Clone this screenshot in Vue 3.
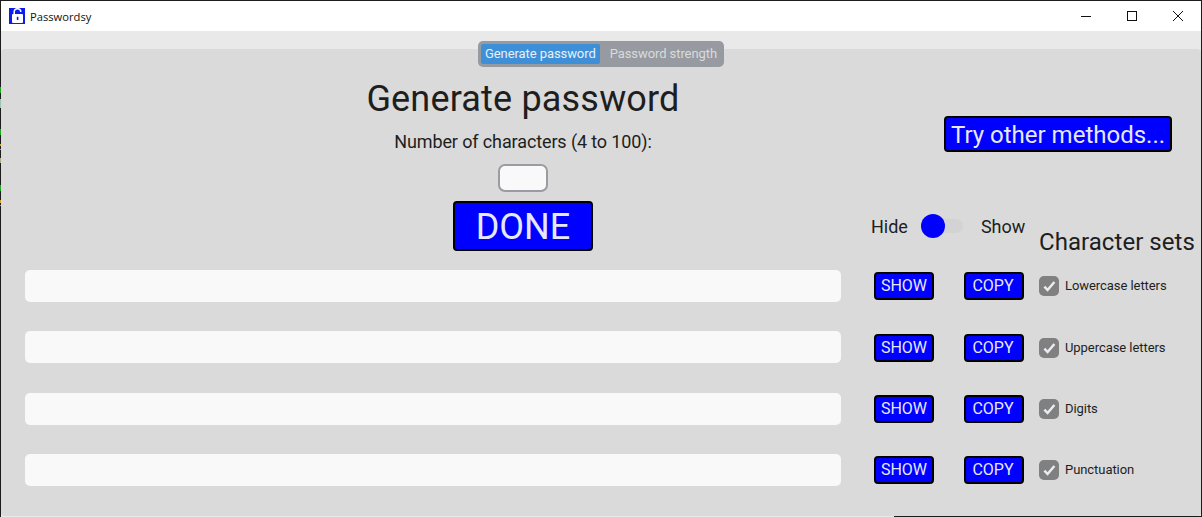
<script setup>
const rows = [
  'Lowercase letters',
  'Uppercase letters',
  'Digits',
  'Punctuation',
]
</script>

<template>
  <div class="window">
    <header class="titlebar">
      <svg class="app-icon" viewBox="0 0 16 16" width="16" height="16">
        <rect width="16" height="16" fill="#0a1cf0" />
        <path d="M5.2 7V4a3.3 3.3 0 0 1 6.6 0" fill="none" stroke="#fff" stroke-width="1.5" />
        <rect x="3" y="6" width="11" height="9" rx="1" fill="#fff" />
        <rect x="7.8" y="8.8" width="1.6" height="3.2" fill="#0a1cf0" />
      </svg>
      <span class="app-name">Passwordsy</span>
      <div class="controls">
        <svg class="ctl" viewBox="0 0 46 30" width="46" height="30">
          <path d="M18 15.5h10" stroke="#111" stroke-width="1" fill="none" />
        </svg>
        <svg class="ctl" viewBox="0 0 46 30" width="46" height="30">
          <rect x="18.5" y="10.5" width="9" height="9" stroke="#111" fill="none" />
        </svg>
        <svg class="ctl" viewBox="0 0 46 30" width="46" height="30">
          <path d="M18 10l10 10M28 10l-10 10" stroke="#111" fill="none" />
        </svg>
      </div>
    </header>

    <div class="content">
      <nav class="tabs">
        <span class="tab active">Generate password</span>
        <span class="tab">Password strength</span>
      </nav>

      <main class="panel">
        <section class="top">
          <div class="intro">
            <h1>Generate password</h1>
            <label class="count-label">Number of characters (4 to 100):</label>
            <input class="count" type="text" />
            <button class="done">DONE</button>
          </div>
          <div class="side">
            <button class="other">Try other methods...</button>
            <div class="side-row">
              <div class="toggle-row">
                <span>Hide</span>
                <span class="switch"><span class="knob"></span></span>
                <span>Show</span>
              </div>
              <h2>Character sets</h2>
            </div>
          </div>
        </section>

        <section class="rows">
          <div v-for="label in rows" :key="label" class="row">
            <div class="field"></div>
            <button class="small show">SHOW</button>
            <button class="small copy">COPY</button>
            <span class="check">
              <svg viewBox="0 0 20 20" width="20" height="20">
                <path d="M5.4 10.6l3.2 3.4L15.4 6" fill="none" stroke="#e9edf2" stroke-width="2.5" />
              </svg>
            </span>
            <span class="check-label">{{ label }}</span>
          </div>
        </section>
      </main>
    </div>
    <div class="edge-left"></div>
    <div class="edge-bottom"></div>
  </div>
</template>

<style scoped>
.window {
  width: 1202px;
  height: 517px;
  box-sizing: border-box;
  border: 1px solid #1c1c1c;
  border-bottom: 0;
  background: #e9e9e9;
  font-family: Roboto, "Liberation Sans", sans-serif;
  color: #1e1e1e;
  display: flex;
  flex-direction: column;
  position: relative;
}
.edge-left {
  position: absolute;
  left: -1px;
  top: 0;
  width: 1px;
  height: 516px;
  background: linear-gradient(
    to bottom,
    #1c1c1c 86px, #1fa81f 86px, #1fa81f 92px, #1c1c1c 92px,
    #1c1c1c 98px, #9cc4ac 98px, #9cc4ac 107px, #1c1c1c 107px,
    #1c1c1c 128px, #1fa81f 128px, #1fa81f 134px, #1c1c1c 134px,
    #1c1c1c 143px, #c9a227 143px, #c9a227 145px, #1c1c1c 145px,
    #1c1c1c 148px, #c9a227 148px, #c9a227 149px, #1c1c1c 149px,
    #1c1c1c 157px, #a8b088 157px, #a8b088 162px, #1c1c1c 162px,
    #1c1c1c 184px, #1fa81f 184px, #1fa81f 190px, #1c1c1c 190px,
    #1c1c1c 199px, #c9a227 199px, #c9a227 202px, #1c1c1c 202px,
    #1c1c1c 204px, #c9a227 204px, #c9a227 205px, #1c1c1c 205px
  );
}
.edge-bottom {
  position: absolute;
  left: 893px;
  right: -1px;
  bottom: 0;
  height: 1px;
  background: #1c1c1c;
}
.titlebar {
  height: 30px;
  flex: none;
  background: #fff;
  display: flex;
  align-items: center;
  padding-left: 8px;
}
.app-icon { flex: none; }
.app-name {
  margin-left: 5px;
  font: 11.2px "Open Sans", "Liberation Sans", sans-serif;
  color: #111;
}
.controls {
  margin-left: auto;
  display: flex;
}
.ctl { display: block; margin-left: 0; }
.content {
  flex: 1;
  display: flex;
  flex-direction: column;
  position: relative;
  padding-top: 18px;
  min-height: 0;
}
.tabs {
  position: absolute;
  top: 10px;
  left: 477px;
  width: 246px;
  height: 26px;
  box-sizing: border-box;
  padding: 3px;
  background: #979aa0;
  border-radius: 5px;
  display: flex;
  font-size: 13px;
  letter-spacing: -0.08px;
  z-index: 1;
}
.tab {
  line-height: 20px;
  padding: 0 5px;
  color: #d9dbdf;
  white-space: nowrap;
}
.tab.active {
  background: #3d8fd8;
  color: #e8f0f8;
  border-radius: 2px;
  box-sizing: border-box;
  width: 120px;
  padding: 0 4px;
  margin-right: 5px;
}
.panel {
  flex: 1;
  min-height: 0;
  background: #dadada;
  border-radius: 4px;
  margin-bottom: 1px;
}
.top {
  height: 221px;
  display: flex;
}
.intro {
  width: 640px;
  margin-left: 202px;
  flex: none;
  display: flex;
  flex-direction: column;
  align-items: center;
}
h1 {
  margin: 29px 0 0;
  font-size: 36px;
  line-height: 42px;
  font-weight: 400;
  letter-spacing: 0.18px;
  color: #1e1e1e;
}
.count-label {
  margin-top: 11px;
  font-size: 18px;
  line-height: 22px;
  letter-spacing: -0.12px;
}
.count {
  margin-top: 11px;
  width: 50px;
  height: 28px;
  box-sizing: border-box;
  border: 2px solid #9a9ca1;
  border-radius: 7px;
  background: #f9f9f9;
  padding: 0;
  outline: none;
}
.done {
  margin-top: 9px;
  width: 140px;
  height: 50px;
  background: #0000ff;
  border: 2px solid #000;
  border-radius: 4px;
  color: #e6e9f5;
  font: 36px Roboto, sans-serif;
  padding: 2px 0 0;
}
.side {
  flex: 1;
  min-width: 0;
  display: flex;
  flex-direction: column;
  align-items: flex-start;
}
.other {
  margin: 67px 0 0 101px;
  width: 228px;
  height: 36px;
  background: #0000ff;
  border: 2px solid #000;
  border-radius: 4px;
  color: #e6e9f5;
  font: 24px Roboto, sans-serif;
  padding: 2px 0 0;
  white-space: nowrap;
}
.side-row {
  display: flex;
  margin-top: 52px;
  width: 100%;
  align-items: flex-start;
}
.toggle-row {
  margin-left: 28px;
  margin-top: 9px;
  width: 168px;
  flex: none;
  display: flex;
  align-items: center;
  font-size: 18px;
  height: 26px;
}
.switch {
  margin-left: 13px;
  margin-right: 18px;
  width: 42px;
  height: 14px;
  border-radius: 7px;
  background: #d3d3d3;
  position: relative;
  flex: none;
}
.knob {
  position: absolute;
  left: 0;
  top: -5px;
  width: 24px;
  height: 24px;
  border-radius: 50%;
  background: #0000ff;
}
h2 {
  margin: 24px 0 0;
  font-size: 24px;
  line-height: 28px;
  font-weight: 400;
  letter-spacing: 0.05px;
  color: #1e1e1e;
  white-space: nowrap;
}
.rows {
  display: flex;
  flex-direction: column;
  gap: 29.33px;
}
.row {
  height: 32px;
  display: flex;
  align-items: center;
}
.field {
  margin-left: 24px;
  width: 816px;
  height: 32px;
  background: #f9f9f9;
  border-radius: 5px;
  flex: none;
}
.small {
  width: 60px;
  height: 28px;
  margin-top: 0.8px;
  background: #0000ff;
  border: 2px solid #000;
  border-radius: 4px;
  color: #e6e9f5;
  font: 16px Roboto, sans-serif;
  padding: 0 0 1px;
  flex: none;
}
.show { margin-left: 33px; }
.copy { margin-left: 30px; padding-right: 2px; }
.check {
  margin-left: 15px;
  margin-top: 0.8px;
  width: 20px;
  height: 20px;
  border-radius: 5px;
  background: #808080;
  flex: none;
  display: block;
}
.check svg { display: block; }
.check-label {
  margin-left: 6px;
  margin-bottom: 0.4px;
  font-size: 13px;
  letter-spacing: -0.06px;
  color: #1e1e1e;
  white-space: nowrap;
}
</style>

<style>
html, body { margin: 0; background: #1c1c1c; }
</style>
